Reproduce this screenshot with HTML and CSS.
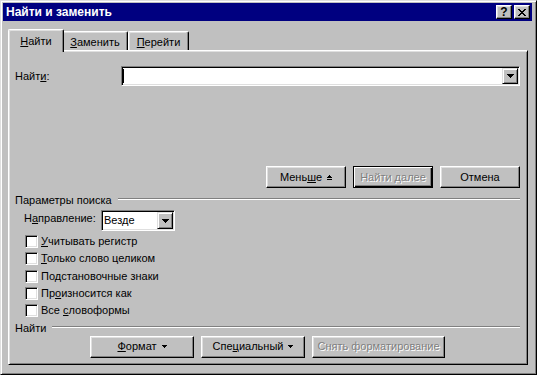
FILE: index.html
```html
<!DOCTYPE html>
<html>
  <head>
    <meta charset="utf-8">
    <title>Найти и заменить</title>
    <link rel="stylesheet" href="styles.css">
  </head>
  <body>
    <div class="window">
      <!-- TITLE BAR -->
      <div class="titlebar">
        <span class="title">Найти и заменить</span>
        <span class="cap-btn help">?</span>
        <span class="cap-btn close">
          <svg width="8" height="7" viewBox="0 0 8 7" shape-rendering="crispEdges"><path d="M0 0h2v1H0zM6 0h2v1H6zM1 1h2v1H1zM5 1h2v1H5zM2 2h4v1H2zM3 3h2v1H3zM2 4h4v1H2zM1 5h2v1H1zM5 5h2v1H5zM0 6h2v1H0zM6 6h2v1H6z" fill="#000"/></svg>
        </span>
      </div>
      <div class="dialog">
        <!-- TABS -->
        <div class="tabs">
          <div class="tab active"><u>Н</u>айти</div>
          <div class="tab tab-replace"><u>З</u>аменить</div>
          <div class="tab tab-goto"><u>П</u>ерейти</div>
        </div>
        <!-- TAB PAGE -->
        <div class="panel">
          <div class="find-row">
            <span class="find-label">Найт<u>и</u>:</span>
            <div class="combo combo-find">
              <span class="caret"></span>
              <span class="combo-btn">
                <svg width="7" height="4" viewBox="0 0 7 4" shape-rendering="crispEdges"><path d="M0 0h7v1H0zM1 1h5v1H1zM2 2h3v1H2zM3 3h1v1H3z" fill="#000"/></svg>
              </span>
            </div>
          </div>
          <div class="action-row">
            <div class="btn">Мень<u>ш</u>е
              <svg class="btn-icon" width="5" height="5" viewBox="0 0 5 5" shape-rendering="crispEdges"><path d="M2 0h1v1H2zM1 1h3v1H1zM0 2h5v1H0zM0 4h5v1H0z" fill="#000"/></svg>
            </div>
            <div class="btn default disabled">Найти далее</div>
            <div class="btn">Отмена</div>
          </div>
          <!-- SEARCH OPTIONS -->
          <div class="group">
            <span>Параметры поиска</span>
            <span class="group-line"></span>
          </div>
          <div class="dir-row">
            <span class="dir-label">Н<u>а</u>правление:</span>
            <div class="combo combo-dir">
              <span class="combo-text">Везде</span>
              <span class="combo-btn">
                <svg width="7" height="4" viewBox="0 0 7 4" shape-rendering="crispEdges"><path d="M0 0h7v1H0zM1 1h5v1H1zM2 2h3v1H2zM3 3h1v1H3z" fill="#000"/></svg>
              </span>
            </div>
          </div>
          <div class="checks">
            <div class="check"><span class="box"></span><span><u>У</u>читывать регистр</span></div>
            <div class="check"><span class="box"></span><span><u>Т</u>олько слово целиком</span></div>
            <div class="check"><span class="box"></span><span>По<u>д</u>становочные знаки</span></div>
            <div class="check"><span class="box"></span><span>Пр<u>о</u>износится как</span></div>
            <div class="check"><span class="box"></span><span>Все <u>с</u>ловоформы</span></div>
          </div>
          <!-- FIND FORMAT -->
          <div class="group group-find">
            <span>Найти</span>
            <span class="group-line"></span>
          </div>
          <div class="bottom-row">
            <div class="btn btn-format"><u>Ф</u>ормат
              <svg class="btn-icon" width="5" height="3" viewBox="0 0 5 3" shape-rendering="crispEdges"><path d="M0 0h5v1H0zM1 1h3v1H1zM2 2h1v1H2z" fill="#000"/></svg>
            </div>
            <div class="btn btn-special">Спе<u>ц</u>иальный
              <svg class="btn-icon" width="5" height="3" viewBox="0 0 5 3" shape-rendering="crispEdges"><path d="M0 0h5v1H0zM1 1h3v1H1zM2 2h1v1H2z" fill="#000"/></svg>
            </div>
            <div class="btn btn-clear disabled">Снять форматирование</div>
          </div>
        </div>
      </div>
    </div>
  </body>
</html>
```

FILE: styles.css
```css
/* BASE */
html, body { margin: 0; padding: 0; }
body {
  width: 537px;
  height: 375px;
  background: #c0c0c0;
  color: #000;
  font-family: "Liberation Sans", Arial, sans-serif;
  font-size: 11px;
  line-height: 13px;
  overflow: hidden;
}
u { text-decoration: underline; text-underline-offset: 1px; }

/* WINDOW FRAME */
.window {
  box-sizing: border-box;
  width: 537px;
  height: 375px;
  padding: 2px;
  border: 1px solid;
  border-color: #dfdfdf #000 #000 #dfdfdf;
  box-shadow: inset 1px 1px #fff, inset -1px -1px #808080;
  display: flex;
  flex-direction: column;
}

/* TITLE BAR */
.titlebar {
  height: 18px;
  margin-right: 2px;
  padding: 0 2px 0 3px;
  background: #000080;
  color: #fff;
  display: flex;
  align-items: flex-start;
}
.title {
  flex: 1;
  font-size: 12px;
  font-weight: bold;
  line-height: 18px;
}
.cap-btn {
  box-sizing: border-box;
  width: 16px;
  height: 14px;
  margin-top: 2px;
  background: #c0c0c0;
  border: 1px solid;
  border-color: #fff #000 #000 #fff;
  box-shadow: inset -1px -1px #808080, inset 1px 1px #dfdfdf;
  display: flex;
  align-items: center;
  justify-content: center;
  color: #000;
}
.cap-btn.help {
  font-weight: bold;
  font-size: 12px;
  line-height: 12px;
}
.cap-btn.close { margin-left: 2px; }

/* DIALOG BODY */
.dialog {
  flex: 1;
  display: flex;
  flex-direction: column;
  padding: 8px 6px 7px 5px;
}

/* TABS */
.tabs {
  height: 21px;
  padding-left: 2px;
  display: flex;
  align-items: flex-end;
}
.tab {
  box-sizing: border-box;
  flex: none;
  height: 19px;
  padding-top: 4px;
  text-align: center;
  background: #c0c0c0;
  border: 1px solid;
  border-bottom: none;
  border-color: #fff #000 #000 #fff;
  border-radius: 2px 2px 0 0;
  box-shadow: inset -1px 0 #808080, inset 1px 1px #dfdfdf;
}
.tab.active {
  width: 56px;
  height: 23px;
  margin: 0 -2px -2px -2px;
  padding-top: 5px;
  position: relative;
  z-index: 1;
}
.tab-replace { width: 66px; }
.tab-goto { width: 61px; }

/* TAB PAGE */
.panel {
  flex: 1;
  box-sizing: border-box;
  padding: 15px 7px 0 6px;
  border: 1px solid;
  border-color: #fff #000 #000 #fff;
  box-shadow: inset 1px 1px #dfdfdf, inset -1px -1px #808080;
  display: flex;
  flex-direction: column;
}

/* COMBO BOXES */
.combo {
  box-sizing: border-box;
  height: 20px;
  padding: 1px;
  background: #fff;
  border: 1px solid;
  border-color: #808080 #fff #fff #808080;
  box-shadow: inset 1px 1px #000, inset -1px -1px #dfdfdf;
  display: flex;
  align-items: center;
}
.combo-btn {
  box-sizing: border-box;
  width: 16px;
  height: 16px;
  margin-left: auto;
  background: #c0c0c0;
  border: 1px solid;
  border-color: #dfdfdf #000 #000 #dfdfdf;
  box-shadow: inset 1px 1px #fff, inset -1px -1px #808080;
  display: flex;
  align-items: center;
  justify-content: center;
}
.combo-btn svg { display: block; }
.caret {
  width: 1px;
  height: 14px;
  background: #000;
}
.combo-text { padding-left: 1px; }

.find-row {
  display: flex;
  align-items: center;
}
.find-label { width: 106px; }
.combo-find { flex: 1; }

/* PUSH BUTTONS */
.btn {
  box-sizing: border-box;
  width: 80px;
  height: 22px;
  border: 1px solid;
  border-color: #fff #000 #000 #fff;
  box-shadow: inset -1px -1px #808080, inset 1px 1px #dfdfdf;
  display: flex;
  align-items: center;
  justify-content: center;
}
.btn.default {
  border-color: #000;
  box-shadow: inset 1px 1px #fff, inset -1px -1px #000, inset -2px -2px #808080;
}
.btn.disabled {
  color: #808080;
  text-shadow: 1px 1px #fff;
}
.btn-icon {
  display: block;
  margin-left: 5px;
}
.action-row {
  margin-top: 80px;
  display: flex;
  justify-content: flex-end;
  gap: 7px;
}

/* GROUP HEADINGS */
.group {
  margin-top: 6px;
  display: flex;
}
.group-line {
  flex: 1;
  height: 0;
  margin: 4px 0 0 6px;
  border-top: 1px solid #808080;
  border-bottom: 1px solid #fff;
}
.group-find { margin-top: 2px; }

/* DIRECTION */
.dir-row {
  margin-top: 3px;
  padding-left: 9px;
  display: flex;
  align-items: flex-start;
}
.dir-label {
  width: 77px;
  margin-top: 2px;
}
.combo-dir {
  width: 74px;
  height: 21px;
}
.combo-dir .combo-btn { height: 17px; }

/* CHECKBOXES */
.checks { margin-top: 2px; }
.check {
  height: 17.33px;
  padding-left: 10px;
  display: flex;
  align-items: center;
}
.box {
  box-sizing: border-box;
  width: 13px;
  height: 13px;
  margin-right: 3px;
  background: #fff;
  border: 1px solid;
  border-color: #808080 #fff #fff #808080;
  box-shadow: inset 1px 1px #000, inset -1px -1px #dfdfdf;
}

/* FORMAT BUTTONS */
.bottom-row {
  margin-top: 1px;
  padding-left: 75px;
  display: flex;
  gap: 7px;
}
.btn-format, .btn-special { width: 104px; }
.btn-clear { width: 133px; }
```
